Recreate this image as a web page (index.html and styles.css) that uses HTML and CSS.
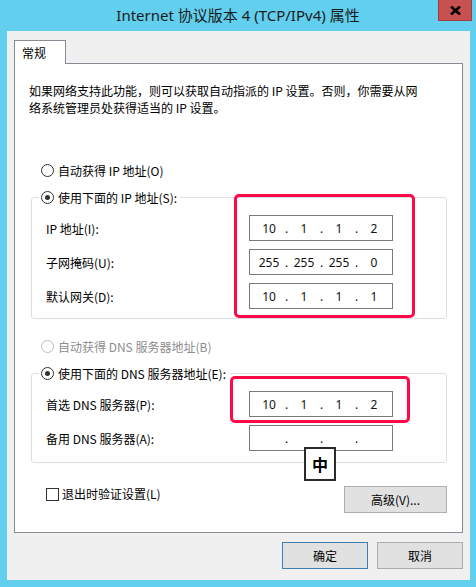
FILE: index.html
```html
<!DOCTYPE html>
<html lang="zh-CN">
<head>
  <meta charset="UTF-8">
  <meta name="viewport" content="width=device-width, initial-scale=1.0">
  <title>Internet 协议版本 4 (TCP/IPv4) 属性</title>
  <link rel="stylesheet" href="styles.css">
</head>
<body>
  <div class="window">
    <div class="titlebar">
      <span></span>
      <div class="title">Internet 协议版本 4 (TCP/IPv4) 属性</div>
      <button class="close" title="关闭">
        <svg width="11" height="9" viewBox="0 0 11 9"><path d="M1 0.5 L10 8.5 M10 0.5 L1 8.5" stroke="#000" stroke-width="2.6" fill="none"/></svg>
      </button>
    </div>

    <div class="client">
      <div class="tabs"><div class="tab">常规</div></div>

      <div class="panel">
        <p class="desc">如果网络支持此功能，则可以获取自动指派的 IP 设置。否则，你需要从网<br>络系统管理员处获得适当的 IP 设置。</p>

        <label class="radio opt-first"><span class="dot"></span>自动获得 IP 地址(O)</label>

        <fieldset class="group">
          <legend><label class="radio"><span class="dot on"></span>使用下面的 IP 地址(S):</label></legend>
          <div class="rows">
            <div class="row">
              <span>IP 地址(I):</span>
              <div class="ip"><span>10</span><i>.</i><span>1</span><i>.</i><span>1</span><i>.</i><span>2</span></div>
            </div>
            <div class="row">
              <span>子网掩码(U):</span>
              <div class="ip"><span>255</span><i>.</i><span>255</span><i>.</i><span>255</span><i>.</i><span>0</span></div>
            </div>
            <div class="row">
              <span>默认网关(D):</span>
              <div class="ip"><span>10</span><i>.</i><span>1</span><i>.</i><span>1</span><i>.</i><span>1</span></div>
            </div>
          </div>
        </fieldset>

        <label class="radio opt-dns disabled"><span class="dot"></span>自动获得 DNS 服务器地址(B)</label>

        <fieldset class="group">
          <legend><label class="radio"><span class="dot on"></span>使用下面的 DNS 服务器地址(E):</label></legend>
          <div class="rows dns-rows">
            <div class="row">
              <span>首选 DNS 服务器(P):</span>
              <div class="ip"><span>10</span><i>.</i><span>1</span><i>.</i><span>1</span><i>.</i><span>2</span></div>
            </div>
            <div class="row">
              <span>备用 DNS 服务器(A):</span>
              <div class="ip"><span></span><i>.</i><span></span><i>.</i><span></span><i>.</i><span></span></div>
            </div>
          </div>
        </fieldset>

        <div class="foot">
          <label class="check"><span class="box"></span>退出时验证设置(L)</label>
          <button class="btn adv">高级(V)...</button>
        </div>

        <!-- annotations drawn over the dialog -->
        <div class="mark mark-ip"></div>
        <div class="mark mark-dns"></div>
        <div class="ime">中</div>
      </div>

      <div class="actions">
        <button class="btn default">确定</button>
        <button class="btn">取消</button>
      </div>
    </div>
  </div>
</body>
</html>
```

FILE: styles.css
```css
body {
  margin: 0;
  background-color: #62cfee;
  font-family: "Noto Sans CJK SC", sans-serif;
  font-size: 12px;
  color: #000;
}
.window {
  width: 476px;
  height: 587px;
}
.titlebar {
  height: 31px;
  display: grid;
  grid-template-columns: 1fr auto 1fr;
}
.title {
  font-family: "Noto Sans", "Noto Sans CJK SC", sans-serif;
  font-size: 15px;
  line-height: 31px;
  white-space: nowrap;
  color: #1b1b1b;
}
.close {
  justify-self: end;
  align-self: start;
  width: 34px;
  height: 21px;
  margin-right: 4px;
  padding: 0;
  background-color: #c75050;
  border: 1px solid #a13d3d;
  border-top: none;
  display: flex;
  align-items: center;
  justify-content: center;
}
.client {
  box-sizing: border-box;
  height: 549px;
  margin: 0 6px 0 7px;
  padding: 9px 7px 0 7px;
  background-color: #f0f0f0;
}
.tabs {
  display: flex;
}
.tab {
  box-sizing: border-box;
  width: 52px;
  height: 24px;
  padding-left: 7px;
  line-height: 23px;
  background: #fff;
  border: 1px solid #898c95;
  border-bottom: none;
  margin-bottom: -1px;
  position: relative;
  z-index: 1;
}
.panel {
  position: relative;
  box-sizing: border-box;
  height: 470px;
  padding: 18px 15px 0 16px;
  background: #fff;
  border: 1px solid #898c95;
}
.desc {
  margin: 0 0 0 -2px;
  line-height: 17px;
}
.radio {
  display: flex;
  align-items: center;
  height: 20px;
  white-space: nowrap;
}
.opt-first {
  margin: 44px 0 0 10px;
}
.opt-dns {
  margin: 17px 0 0 10px;
}
.dot {
  box-sizing: border-box;
  width: 13px;
  height: 13px;
  margin-right: 4px;
  border: 1px solid #333;
  border-radius: 50%;
  background: #fff;
  display: flex;
  align-items: center;
  justify-content: center;
}
.dot.on::after {
  content: "";
  width: 5px;
  height: 5px;
  border-radius: 50%;
  background: #333;
}
.disabled {
  color: #8d8d8d;
}
.disabled .dot {
  border-color: #bcbcbc;
}
.group {
  margin: 7px 0 0 0;
  padding: 8px 0 9px 7px;
  border: 1px solid #dcdfe6;
  border-radius: 3px;
  min-width: 0;
}
.group legend {
  padding: 0 3px 0 2px;
}
.rows {
  display: flex;
  flex-direction: column;
  gap: 8px;
  margin-left: 7px;
}
.dns-rows {
  padding-bottom: 2px;
}
.row {
  display: grid;
  grid-template-columns: 203px 144px;
  align-items: center;
  height: 26px;
  white-space: nowrap;
}
.ip {
  box-sizing: border-box;
  height: 26px;
  padding-left: 5px;
  border: 1px solid #7a7a7a;
  display: flex;
  align-items: center;
  font-family: "Noto Sans", sans-serif;
  font-size: 12px;
  color: #111;
}
.ip span {
  width: 28px;
  text-align: center;
}
.ip i {
  width: 7px;
  font-style: normal;
  text-align: center;
}
.foot {
  display: flex;
  justify-content: space-between;
  align-items: flex-start;
  margin-top: 23px;
  padding-left: 15px;
}
.check {
  display: flex;
  align-items: center;
  line-height: 16px;
}
.box {
  box-sizing: border-box;
  width: 13px;
  height: 13px;
  margin-right: 3px;
  border: 1px solid #333;
  background: #fff;
}
.btn {
  box-sizing: border-box;
  height: 27px;
  padding: 0;
  font: inherit;
  color: #000;
  background-color: #e1e1e1;
  border: 1px solid #adadad;
}
.adv {
  width: 103px;
}
.actions {
  display: flex;
  justify-content: flex-end;
  gap: 9px;
  margin-top: 9px;
}
.actions .btn {
  width: 86px;
}
.default {
  border-color: #3c7fb1;
}
.mark {
  position: absolute;
  box-sizing: border-box;
  border: 3px solid #ff0a47;
  border-radius: 5px;
}
.mark-ip {
  left: 219px;
  top: 130px;
  width: 181px;
  height: 124px;
}
.mark-dns {
  left: 215px;
  top: 312px;
  width: 180px;
  height: 47px;
}
.ime {
  position: absolute;
  left: 289px;
  top: 383px;
  box-sizing: border-box;
  width: 32px;
  height: 34px;
  border: 2px solid #2a2a2a;
  background: #fff;
  font-size: 16px;
  font-weight: bold;
  display: flex;
  align-items: center;
  justify-content: center;
}
```
